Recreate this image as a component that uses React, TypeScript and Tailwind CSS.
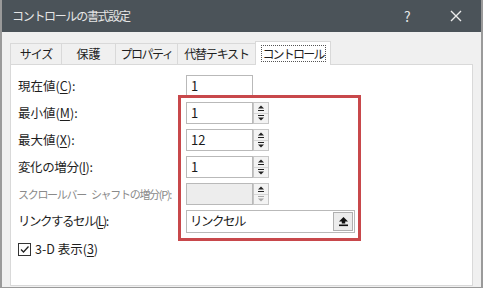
import React from 'react';

function SpinUp({ dim }: { dim?: boolean }) {
  const c = dim ? '#9a9a9a' : '#222';
  return (
    <svg width="8" height="8" viewBox="0 0 8 8">
      <polygon points="1,4.5 4,1.5 7,4.5" fill={c} />
      <rect x="1" y="6" width="6" height="1" fill={c} />
    </svg>
  );
}

function SpinDown({ dim }: { dim?: boolean }) {
  const c = dim ? '#a8a8a8' : '#222';
  return (
    <svg width="8" height="8" viewBox="0 0 8 8">
      <rect x="1" y="1" width="6" height="1" fill={c} />
      <polygon points="1,3.5 4,6.5 7,3.5" fill={c} />
    </svg>
  );
}

function Spinner({ disabled }: { disabled?: boolean }) {
  return (
    <div className="w-[16px] h-[22px] border border-[#c6c6c6] bg-[#ececec] flex flex-col">
      <div className="flex-1 flex items-center justify-center border-b border-[#d6d6d6] bg-[#f3f3f3]">
        <SpinUp />
      </div>
      <div className="flex-1 flex items-center justify-center bg-[#f3f3f3]">
        <SpinDown dim={disabled} />
      </div>
    </div>
  );
}

function Label({ text, keyChar, gray, tight }: { text: React.ReactNode; keyChar: string; gray?: boolean; tight?: string }) {
  return (
    <div
      className={`w-[168px] shrink-0 whitespace-nowrap leading-none ${tight ?? 'text-[12.5px]'} ${
        gray ? 'text-[#8a8a8a]' : 'text-[#1e1e1e]'
      }`}
    >
      {text}(<span className={gray ? '' : 'underline underline-offset-2'}>{keyChar}</span>):
    </div>
  );
}

function Row({ children }: { children: React.ReactNode }) {
  return <div className="flex items-center h-[22px] mb-[5px]">{children}</div>;
}

function Field({ value, disabled }: { value?: string; disabled?: boolean }) {
  return (
    <div
      className={`w-[67px] h-[22px] border border-[#b9b9b9] flex items-center pl-[4px] text-[13px] text-[#1a1a1a] ${
        disabled ? 'bg-[#ededed]' : 'bg-white'
      }`}
    >
      {value}
    </div>
  );
}

export default function App() {
  const tabs = [
    { name: 'サイズ', w: 'w-[51px]', t: 'tracking-[-1px]' },
    { name: '保護', w: 'w-[54px]', t: '' },
    { name: 'プロパティ', w: 'w-[62px]', t: 'tracking-[-1.5px]' },
    { name: '代替テキスト', w: 'w-[78px]', t: 'tracking-[-1.2px]' }
  ];

  return (
    <div className='w-[483px] h-[288px] bg-[#f0f0f0] border-l-2 border-r-2 border-b border-[#9a9a9a] flex flex-col relative overflow-hidden font-["Noto_Sans_CJK_JP","Noto_Sans",sans-serif]'>
      {/* Title bar */}
      <div className="h-[32px] shrink-0 bg-[#4b5359] flex items-center pl-[10px] text-[12px] text-[#e6e6e6]">
        <span className="flex-1 whitespace-nowrap tracking-[-1.3px]">コントロールの書式設定</span>
        <span className="text-[14px] w-[12px] mr-[34px]">?</span>
        <svg width="12" height="12" viewBox="0 0 12 12" className="mr-[19px]">
          <path d="M1 1 L11 11 M11 1 L1 11" stroke="#ececec" strokeWidth="1.4" />
        </svg>
      </div>

      {/* Body */}
      <div className="flex-1 flex flex-col pl-[8px] pr-[8px] pt-[9px] pb-[1px]">
        {/* Tabs */}
        <div className="flex items-end h-[23px] shrink-0">
          {tabs.map((t) => (
            <div
              key={t.name}
              className={`${t.w} ${t.t} h-[21px] border-t border-l border-[#d9d9d9] bg-[#f0f0f0] flex items-center justify-center whitespace-nowrap text-[12px] text-[#1e1e1e]`}
            >
              {t.name}
            </div>
          ))}
          <div className="w-[76px] h-[24px] -mb-px relative z-10 bg-white border border-b-0 border-[#d9d9d9] flex items-center justify-center">
            <div className="w-[65px] border border-dotted border-[#555] h-[17px] flex items-center justify-center whitespace-nowrap text-[12px] tracking-[-1.8px] text-[#1e1e1e]">
              コントロール
            </div>
          </div>
        </div>

        {/* Panel */}
        <div className="flex-1 bg-white border border-[#d9d9d9] pl-[7px] pt-[10px]">
          <Row>
            <Label text="現在値" keyChar="C" />
            <Field value="1" />
          </Row>
          <Row>
            <Label text="最小値" keyChar="M" />
            <Field value="1" />
            <Spinner />
          </Row>
          <Row>
            <Label text="最大値" keyChar="X" />
            <Field value="12" />
            <Spinner />
          </Row>
          <Row>
            <Label text="変化の増分" keyChar="I" tight="text-[12.5px] tracking-[-0.4px]" />
            <Field value="1" />
            <Spinner />
          </Row>
          <Row>
            <Label
              text={
                <>
                  スクロールバー<span className="inline-block w-[5px]"> </span>シャフトの増分
                </>
              }
              keyChar="P"
              gray
              tight="text-[11px] tracking-[-1.3px]"
            />
            <Field disabled />
            <Spinner disabled />
          </Row>
          <Row>
            <Label text="リンクするセル" keyChar="L" tight="text-[12.5px] tracking-[-1.5px]" />
            <div className="w-[169px] h-[23px] border border-[#b9b9b9] bg-white flex items-center pl-[3px] text-[12.5px] tracking-[-1.5px] text-[#1a1a1a]">
              <span className="flex-1 whitespace-nowrap">リンクセル</span>
              <div className="w-[20px] h-[19px] mr-[1px] bg-[#ececec] border border-[#b0b0b0] flex items-center justify-center">
                <svg width="11" height="11" viewBox="0 0 11 11">
                  <polygon points="1,5.5 5.5,1 10,5.5" fill="#111" />
                  <rect x="3.8" y="5" width="3.4" height="2.5" fill="#111" />
                  <rect x="1" y="8.5" width="9" height="1.6" fill="#111" />
                </svg>
              </div>
            </div>
          </Row>

          {/* Checkbox */}
          <div className="flex items-center mt-[10px] h-[14px]">
            <div className="w-[13px] h-[13px] border border-[#333] bg-white flex items-center justify-center">
              <svg width="11" height="11" viewBox="0 0 11 11">
                <path d="M2 5.5 L4.5 8 L9.5 2.5" stroke="#222" strokeWidth="1.3" fill="none" />
              </svg>
            </div>
            <span className="ml-[4px] whitespace-nowrap text-[12.5px] leading-none text-[#1e1e1e]">
              3-D 表示(<span className="underline underline-offset-2">3</span>)
            </span>
          </div>
        </div>
      </div>

      {/* Red annotation frame */}
      <div className="absolute left-[176px] top-[95px] w-[183px] h-[146px] border-[3px] border-[#c8484b] pointer-events-none" />
    </div>
  );
}
